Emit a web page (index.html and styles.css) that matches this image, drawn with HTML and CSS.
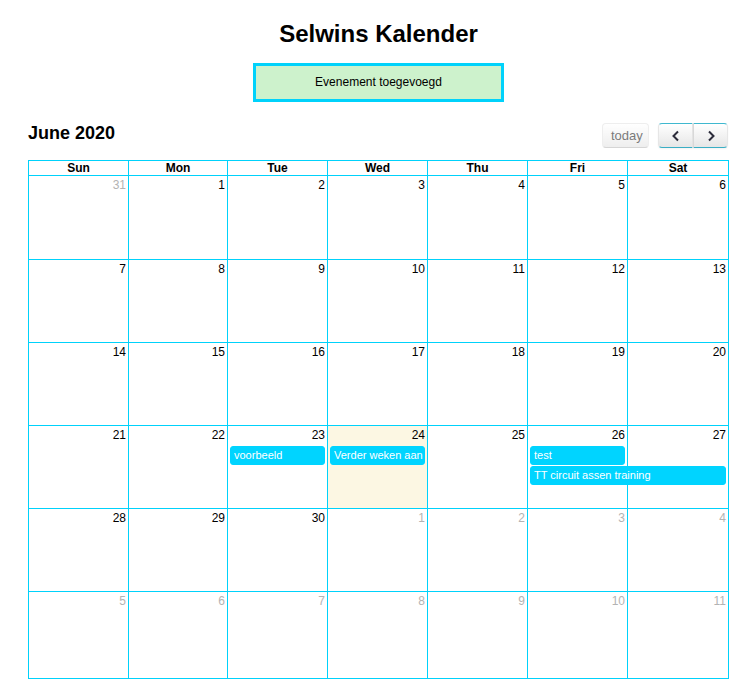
FILE: index.html
```html
<!DOCTYPE html>
<html lang="nl">
<head>
<meta charset="utf-8">
<title>Selwins Kalender</title>
<link rel="stylesheet" href="styles.css">
</head>
<body>
<div class="wrap">
  <h1 class="title">Selwins Kalender</h1>
  <div class="notice">Evenement toegevoegd</div>

  <div class="toolbar">
    <h2 class="month">June 2020</h2>
    <div class="tools">
      <button class="btn today-btn" disabled>today</button>
      <div class="group">
        <button class="btn nav prev" aria-label="prev">
          <svg width="10" height="12" viewBox="0 0 10 12"><path d="M7 1.5 L2.5 6 L7 10.5" fill="none" stroke="#2b2b3a" stroke-width="2"/></svg>
        </button>
        <button class="btn nav next" aria-label="next">
          <svg width="10" height="12" viewBox="0 0 10 12"><path d="M3 1.5 L7.5 6 L3 10.5" fill="none" stroke="#2b2b3a" stroke-width="2"/></svg>
        </button>
      </div>
    </div>
  </div>

  <div class="cal">
    <div class="head">
      <div class="hcell">Sun</div><div class="hcell">Mon</div><div class="hcell">Tue</div><div class="hcell">Wed</div><div class="hcell">Thu</div><div class="hcell">Fri</div><div class="hcell">Sat</div>
    </div>

    <div class="week w-first">
      <div class="cell c1"></div><div class="cell c2"></div><div class="cell c3"></div><div class="cell c4"></div><div class="cell c5"></div><div class="cell c6"></div><div class="cell c7"></div>
      <div class="num c1 other">31</div><div class="num c2">1</div><div class="num c3">2</div><div class="num c4">3</div><div class="num c5">4</div><div class="num c6">5</div><div class="num c7">6</div>
    </div>

    <div class="week">
      <div class="cell c1"></div><div class="cell c2"></div><div class="cell c3"></div><div class="cell c4"></div><div class="cell c5"></div><div class="cell c6"></div><div class="cell c7"></div>
      <div class="num c1">7</div><div class="num c2">8</div><div class="num c3">9</div><div class="num c4">10</div><div class="num c5">11</div><div class="num c6">12</div><div class="num c7">13</div>
    </div>

    <div class="week">
      <div class="cell c1"></div><div class="cell c2"></div><div class="cell c3"></div><div class="cell c4"></div><div class="cell c5"></div><div class="cell c6"></div><div class="cell c7"></div>
      <div class="num c1">14</div><div class="num c2">15</div><div class="num c3">16</div><div class="num c4">17</div><div class="num c5">18</div><div class="num c6">19</div><div class="num c7">20</div>
    </div>

    <div class="week">
      <div class="cell c1"></div><div class="cell c2"></div><div class="cell c3"></div><div class="cell c4 is-today"></div><div class="cell c5"></div><div class="cell c6"></div><div class="cell c7"></div>
      <div class="num c1">21</div><div class="num c2">22</div><div class="num c3">23</div><div class="num c4">24</div><div class="num c5">25</div><div class="num c6">26</div><div class="num c7">27</div>
      <div class="ev r2 c3">voorbeeld</div>
      <div class="ev r2 c4">Verder weken aan de kalender</div>
      <div class="ev r2 c6">test</div>
      <div class="ev r3 c6-7">TT circuit assen training</div>
    </div>

    <div class="week">
      <div class="cell c1"></div><div class="cell c2"></div><div class="cell c3"></div><div class="cell c4"></div><div class="cell c5"></div><div class="cell c6"></div><div class="cell c7"></div>
      <div class="num c1">28</div><div class="num c2">29</div><div class="num c3">30</div><div class="num c4 other">1</div><div class="num c5 other">2</div><div class="num c6 other">3</div><div class="num c7 other">4</div>
    </div>

    <div class="week w-last">
      <div class="cell c1"></div><div class="cell c2"></div><div class="cell c3"></div><div class="cell c4"></div><div class="cell c5"></div><div class="cell c6"></div><div class="cell c7"></div>
      <div class="num c1 other">5</div><div class="num c2 other">6</div><div class="num c3 other">7</div><div class="num c4 other">8</div><div class="num c5 other">9</div><div class="num c6 other">10</div><div class="num c7 other">11</div>
    </div>
  </div>
</div>
</body>
</html>
```

FILE: styles.css
```css
html, body {
  margin: 0;
  padding: 0;
  background: #fff;
}

body {
  font-family: "Liberation Sans", Arial, sans-serif;
  font-size: 12px;
  color: #000;
}

.wrap {
  width: 701px;
  margin-left: 28px;
}

.title {
  margin: 20px 0 0;
  font-size: 24px;
  line-height: 28px;
  font-weight: bold;
  text-align: center;
}

.notice {
  box-sizing: border-box;
  width: 251px;
  height: 39px;
  margin: 15px auto 0;
  border: 3px solid #00d2fb;
  background: #cdf2cc;
  text-align: center;
  line-height: 33px;
  font-size: 12px;
}

.toolbar {
  display: flex;
  justify-content: space-between;
  align-items: flex-start;
  margin-top: 21px;
  margin-bottom: 12px;
  padding-right: 1px;
}

.month {
  margin: 0;
  font-size: 18px;
  font-weight: bold;
  line-height: normal;
}

.tools {
  display: flex;
  gap: 9px;
}

.group {
  display: flex;
}

.btn {
  box-sizing: border-box;
  height: 25px;
  margin: 0;
  padding: 0 8px;
  font-family: "Liberation Sans", Arial, sans-serif;
  font-size: 13px;
  color: #333;
  background: linear-gradient(#ffffff, #e6e6e6);
  border: 1px solid;
  border-color: #e6e6e6 #e6e6e6 #bfbfbf;
  border-radius: 4px;
  box-shadow: inset 0 1px 0 rgba(255,255,255,.2), 0 1px 2px rgba(0,0,0,.05);
  cursor: pointer;
}

.today-btn {
  width: 47px;
  opacity: .65;
  box-shadow: none;
  cursor: default;
}

.nav {
  width: 35px;
  display: flex;
  align-items: center;
  justify-content: center;
  padding: 0;
  border-top-color: #3fb8cf;
  border-bottom-color: #3aaec4;
}

.prev {
  border-top-right-radius: 0;
  border-bottom-right-radius: 0;
}

.next {
  border-top-left-radius: 0;
  border-bottom-left-radius: 0;
  border-left-color: #d8d8d8;
}

.cal {
  width: 700px;
  border-left: 1px solid #00d2fb;
  border-top: 1px solid #00d2fb;
}

.head,
.week {
  display: grid;
  grid-template-columns: 100px 99px 100px 100px 100px 100px 101px;
}

.hcell {
  height: 15px;
  box-sizing: border-box;
  border-right: 1px solid #00d2fb;
  border-bottom: 1px solid #00d2fb;
  text-align: center;
  font-weight: bold;
  line-height: 14px;
}

.week {
  height: 83px;
  grid-template-rows: 20px auto auto 1fr;
}

.w-first { height: 84px; }
.w-last { height: 87px; }

.cell {
  grid-row: 1 / -1;
  border-right: 1px solid #00d2fb;
  border-bottom: 1px solid #00d2fb;
}

.cell.is-today {
  background: #fcf7e3;
}

.c1 { grid-column: 1; }
.c2 { grid-column: 2; }
.c3 { grid-column: 3; }
.c4 { grid-column: 4; }
.c5 { grid-column: 5; }
.c6 { grid-column: 6; }
.c7 { grid-column: 7; }
.c6-7 { grid-column: 6 / 8; }

.num {
  grid-row: 1;
  padding: 2px 3px 0 0;
  line-height: 14px;
  text-align: right;
  font-size: 12px;
}

.num.other {
  color: #b3b3b3;
}

.ev {
  height: 19px;
  box-sizing: border-box;
  margin: 0 3px 1px 2px;
  padding: 0 3px;
  background: #00d4ff;
  border: 1px solid #00d4ff;
  border-radius: 3px;
  color: #fff;
  font-size: 11px;
  line-height: 17px;
  white-space: nowrap;
  overflow: hidden;
}

.r2 { grid-row: 2; }
.r3 { grid-row: 3; }

.c6-7.ev { margin-right: 3px; }
```
